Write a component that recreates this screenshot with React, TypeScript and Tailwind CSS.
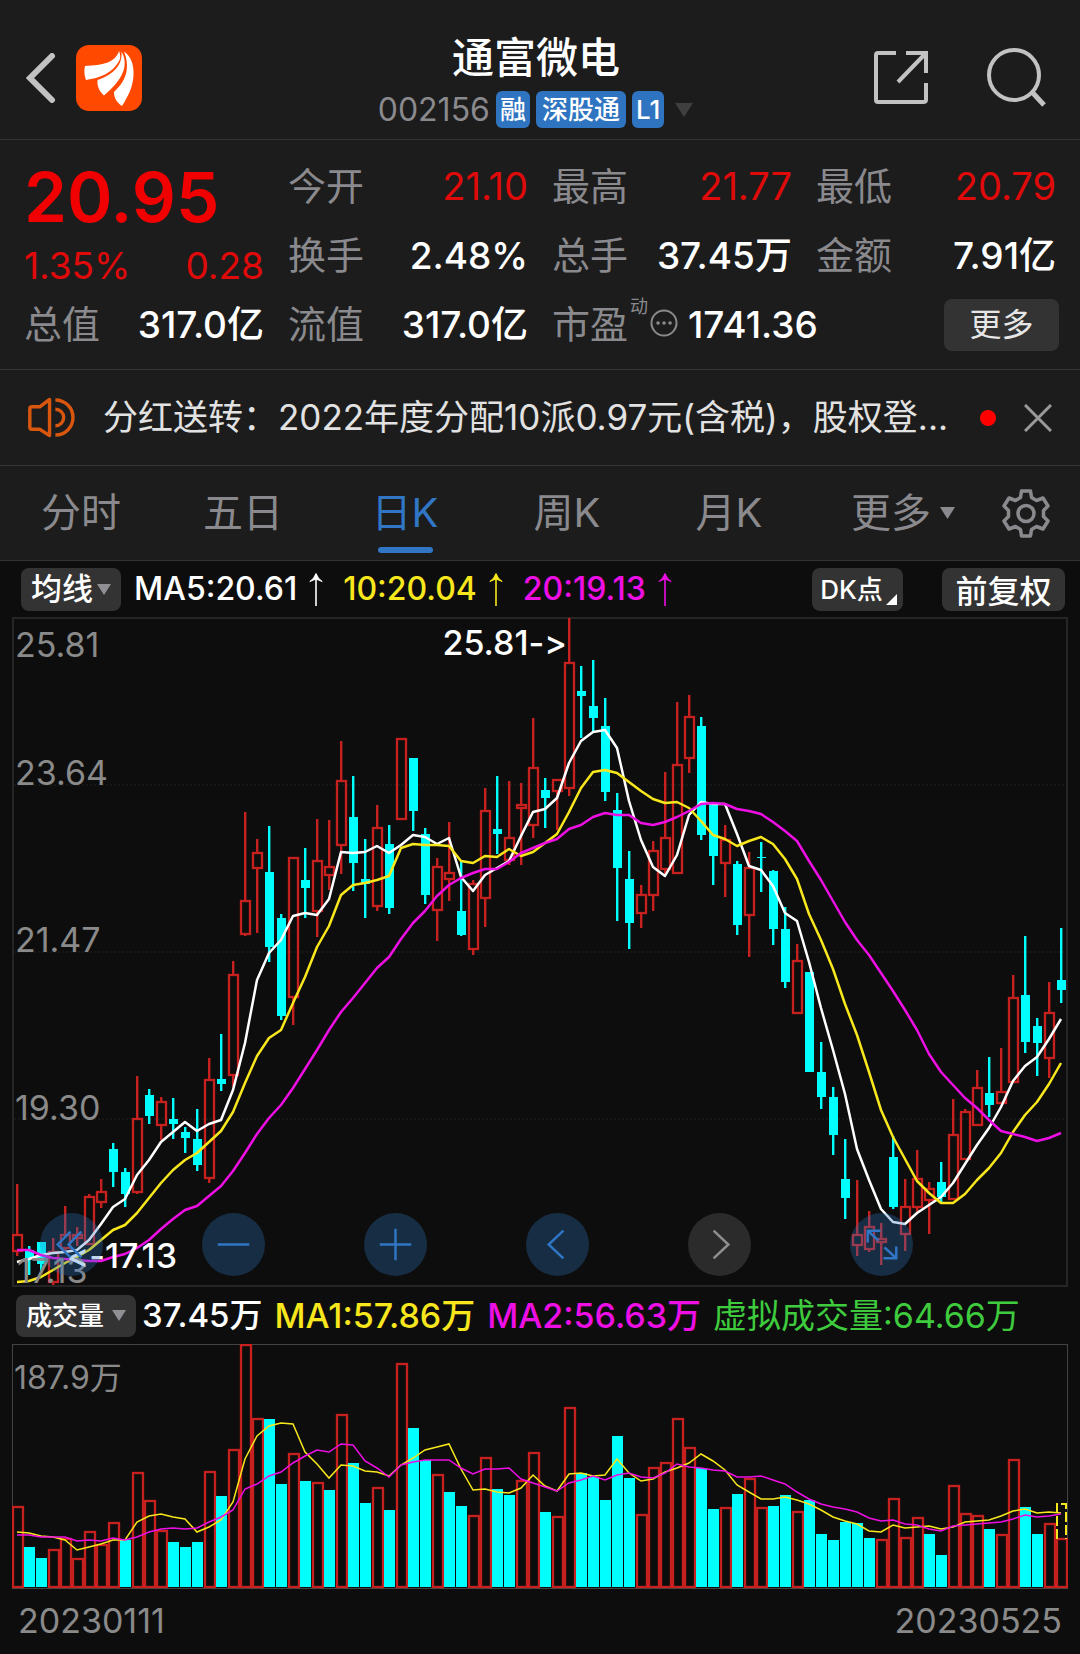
import React from "react";

type Candle = [kind: "r" | "c", high: number, top: number, bottom: number, low: number];

const RED = "#c6211f";
const CYAN = "#00ffff";
const YELLOW = "#f8e71c";
const MAGENTA = "#ee0fe4";

const candles: Candle[] = [
  ["r", 1184, 1235, 1251, 1256], ["c", 1246, 1250, 1259, 1275], ["c", 1242, 1242, 1264, 1271], ["r", 1238, 1252, 1282, 1285],
  ["r", 1206, 1235, 1248, 1252], ["r", 1227, 1235, 1238, 1246], ["r", 1194, 1197, 1244, 1244], ["r", 1179, 1192, 1202, 1208],
  ["c", 1143, 1149, 1172, 1187], ["c", 1168, 1172, 1194, 1207], ["r", 1076, 1119, 1192, 1194], ["c", 1089, 1095, 1116, 1124],
  ["r", 1097, 1102, 1125, 1140], ["c", 1098, 1119, 1124, 1139], ["c", 1127, 1132, 1138, 1153], ["c", 1109, 1139, 1165, 1171],
  ["r", 1058, 1080, 1178, 1183], ["c", 1034, 1079, 1084, 1091], ["r", 961, 975, 1075, 1087], ["r", 812, 901, 934, 936],
  ["r", 839, 853, 868, 933], ["c", 826, 872, 947, 962], ["c", 914, 918, 1016, 1020], ["r", 857, 858, 997, 1025],
  ["c", 848, 880, 888, 918], ["r", 819, 861, 911, 937], ["r", 820, 867, 875, 890], ["r", 741, 781, 845, 874],
  ["c", 776, 817, 863, 891], ["c", 839, 879, 884, 918], ["r", 805, 828, 906, 911], ["c", 825, 844, 908, 914],
  ["r", 739, 739, 819, 819], ["c", 758, 758, 811, 831], ["c", 828, 834, 895, 904], ["r", 858, 867, 910, 941],
  ["r", 822, 873, 879, 901], ["c", 862, 911, 935, 936], ["r", 880, 884, 949, 955], ["r", 788, 811, 898, 927],
  ["c", 776, 829, 834, 854], ["r", 781, 838, 860, 865], ["r", 783, 805, 808, 865], ["r", 718, 768, 825, 838],
  ["c", 778, 790, 798, 828], ["r", 779, 780, 791, 830], ["r", 618, 663, 788, 796], ["c", 666, 691, 696, 738],
  ["c", 660, 706, 718, 731], ["c", 698, 726, 792, 801], ["c", 793, 810, 868, 921], ["c", 851, 879, 923, 949],
  ["r", 885, 895, 913, 928], ["r", 841, 851, 895, 911], ["r", 772, 838, 869, 874], ["r", 702, 765, 873, 873],
  ["r", 695, 717, 758, 773], ["c", 717, 726, 835, 840], ["c", 804, 805, 856, 885], ["r", 825, 840, 863, 897],
  ["c", 861, 864, 925, 935], ["r", 852, 868, 915, 957], ["c", 842, 857, 858, 892], ["c", 870, 871, 929, 945],
  ["c", 907, 929, 982, 988], ["r", 944, 961, 1013, 1013], ["c", 972, 972, 1072, 1072], ["c", 1042, 1072, 1097, 1109],
  ["c", 1087, 1097, 1135, 1155], ["c", 1139, 1179, 1198, 1219], ["r", 1180, 1235, 1245, 1256], ["r", 1211, 1227, 1249, 1252],
  ["r", 1223, 1239, 1242, 1265], ["c", 1136, 1157, 1207, 1209], ["r", 1179, 1207, 1234, 1251], ["r", 1150, 1179, 1207, 1213],
  ["r", 1182, 1189, 1200, 1234], ["c", 1162, 1182, 1197, 1202], ["r", 1099, 1135, 1199, 1199], ["r", 1109, 1112, 1159, 1159],
  ["r", 1070, 1088, 1125, 1125], ["c", 1057, 1093, 1105, 1117], ["r", 1048, 1092, 1103, 1103], ["r", 975, 998, 1082, 1082],
  ["c", 936, 995, 1042, 1053], ["c", 1018, 1026, 1043, 1076], ["r", 982, 1013, 1058, 1078], ["c", 928, 980, 990, 1003],
];

const ma5 = [1262, 1259, 1255, 1253, 1252, 1250, 1240, 1224, 1207, 1199, 1175, 1160, 1142, 1132, 1122, 1131, 1124, 1120, 1090, 1043, 980, 953, 940, 916, 913, 915, 899, 852, 853, 852, 846, 853, 845, 835, 837, 844, 838, 877, 891, 875, 868, 861, 836, 812, 809, 798, 763, 741, 732, 730, 748, 801, 840, 867, 876, 855, 815, 802, 804, 804, 834, 866, 870, 886, 913, 921, 962, 1008, 1050, 1094, 1149, 1180, 1209, 1222, 1224, 1213, 1205, 1197, 1183, 1164, 1145, 1128, 1107, 1081, 1066, 1057, 1039, 1019];
const ma10 = [1282, 1281, 1277, 1270, 1263, 1257, 1250, 1240, 1230, 1225, 1213, 1198, 1183, 1170, 1160, 1153, 1142, 1131, 1112, 1083, 1056, 1038, 1030, 1003, 977, 947, 926, 895, 885, 883, 880, 876, 848, 844, 845, 845, 846, 861, 863, 856, 857, 849, 856, 852, 843, 834, 812, 788, 772, 770, 773, 782, 791, 799, 803, 802, 808, 821, 835, 839, 846, 841, 837, 844, 859, 879, 914, 940, 969, 1004, 1035, 1072, 1110, 1137, 1159, 1181, 1193, 1203, 1203, 1194, 1180, 1168, 1153, 1132, 1115, 1102, 1084, 1063];
const ma20 = [1250, 1250, 1255, 1258, 1259, 1260, 1261, 1261, 1257, 1254, 1248, 1240, 1229, 1219, 1210, 1206, 1196, 1186, 1171, 1153, 1134, 1118, 1105, 1088, 1069, 1050, 1030, 1012, 998, 983, 968, 957, 939, 923, 911, 896, 885, 878, 873, 869, 869, 862, 853, 848, 843, 839, 829, 825, 817, 813, 815, 815, 823, 825, 822, 817, 811, 804, 803, 804, 809, 811, 814, 822, 831, 841, 861, 880, 901, 922, 940, 955, 973, 991, 1010, 1030, 1054, 1072, 1085, 1098, 1108, 1120, 1131, 1134, 1137, 1141, 1138, 1133];

const volumeTops = [1507, 1547, 1558, 1550, 1539, 1559, 1532, 1545, 1523, 1540, 1473, 1501, 1531, 1542, 1547, 1542, 1472, 1496, 1450, 1345, 1419, 1419, 1484, 1454, 1481, 1483, 1490, 1415, 1463, 1503, 1488, 1510, 1364, 1428, 1460, 1475, 1492, 1506, 1516, 1458, 1489, 1495, 1481, 1453, 1512, 1517, 1408, 1473, 1477, 1500, 1436, 1478, 1515, 1468, 1463, 1419, 1448, 1468, 1509, 1508, 1494, 1479, 1508, 1506, 1495, 1512, 1500, 1534, 1540, 1522, 1523, 1538, 1540, 1499, 1538, 1518, 1534, 1555, 1486, 1514, 1516, 1529, 1535, 1460, 1507, 1534, 1524, 1539];
const volumeKinds = "rccrrrrrrcrrrcccrcrrrccrcrcrccrcrccrccrrccrrcrrccccc" + "rrrrrccrcrrccrccccc" + "crrrrccrrrcrrccrr";
const volMa1 = [1532, 1533, 1536, 1537, 1540, 1550, 1547, 1544, 1540, 1540, 1522, 1516, 1514, 1517, 1519, 1532, 1527, 1520, 1502, 1459, 1436, 1426, 1423, 1424, 1452, 1464, 1478, 1465, 1466, 1471, 1472, 1476, 1465, 1458, 1450, 1447, 1444, 1469, 1490, 1489, 1492, 1493, 1488, 1475, 1486, 1491, 1474, 1473, 1476, 1475, 1459, 1473, 1481, 1479, 1472, 1468, 1463, 1454, 1461, 1470, 1485, 1492, 1499, 1499, 1497, 1500, 1504, 1510, 1517, 1521, 1524, 1531, 1532, 1525, 1528, 1527, 1526, 1529, 1527, 1522, 1521, 1520, 1516, 1511, 1509, 1513, 1512, 1513];
const volMa2 = [1535, 1535, 1537, 1537, 1537, 1541, 1540, 1541, 1538, 1540, 1537, 1532, 1529, 1528, 1529, 1528, 1522, 1517, 1510, 1489, 1484, 1476, 1472, 1463, 1456, 1450, 1452, 1444, 1445, 1461, 1468, 1477, 1465, 1462, 1460, 1460, 1460, 1468, 1474, 1469, 1469, 1468, 1479, 1483, 1487, 1491, 1483, 1480, 1476, 1480, 1475, 1473, 1477, 1478, 1473, 1464, 1467, 1468, 1470, 1471, 1477, 1477, 1476, 1480, 1484, 1492, 1499, 1504, 1507, 1509, 1512, 1518, 1521, 1520, 1524, 1525, 1529, 1531, 1526, 1525, 1524, 1523, 1522, 1519, 1515, 1517, 1516, 1514];

const points = (ys: number[]) => ys.map((y, i) => `${17 + 12 * i},${y}`).join(" ");

function Caret({ className }: { className: string }) {
  return (
    <svg viewBox="0 0 14 11" className={className} aria-hidden="true">
      <path d="M0 0H14L7 11Z" fill="currentColor" />
    </svg>
  );
}

function UpArrow() {
  return (
    <svg viewBox="0 0 14 34" className="ml-3 h-[34px] w-[14px]" fill="none" stroke="currentColor" aria-hidden="true">
      <path d="M7 34V2" strokeWidth="1.6" />
      <path d="M0.8 9.5Q5 7 7 1.5Q9 7 13.2 9.5L7 7Z" fill="currentColor" strokeWidth="1" />
    </svg>
  );
}

function Header() {
  return (
    <header className="grid h-[140px] grid-cols-[1fr_auto_1fr] items-center border-b border-[#333333] pr-[34px] pl-[26px]">
      <div className="flex items-center gap-5 pt-4">
        <button aria-label="返回" className="text-[#c2c2c2]">
          <svg viewBox="0 0 30 50" className="h-[50px] w-[30px]" fill="none" stroke="currentColor" strokeWidth="6">
            <path d="M26 3L4 25L26 47" strokeLinecap="round" />
          </svg>
        </button>
        <button aria-label="东方财富">
          <svg viewBox="0 0 66 66" className="size-[66px]">
            <rect width="66" height="66" rx="13" fill="#ff4800" />
            <g fill="#ffffff">
              <path d="M9 21C27 20 39 18 43 6C45 11 44.500 14 42.500 17C36 28 24 33 10 35C8 30 8 25 9 21Z" />
              <path d="M45.500 6.500C50 14 50 24 44 33C39 41 33 46 28 50.500C23 46 21 41 21.500 35C34 31 47 22 45.500 6.500Z" />
              <path d="M48 6.500C55 11 58 20 57.500 30C57 43 51 53 46 61C39 56 38 51 38 47C49 37 55 24 48 6.500Z" />
            </g>
          </svg>
        </button>
      </div>
      <div className="flex flex-col items-center pt-7">
        <h1 className="text-[42px] leading-[52px] font-medium text-white">通富微电</h1>
        <button className="flex items-center gap-[6px] text-[26px] font-medium text-white">
          <span className="text-[32px] leading-[52px] font-normal text-[#8a8a8e]">002156</span>
          <span className="flex h-[37px] items-center rounded-[6px] bg-[#2f74c0] px-1">融</span>
          <span className="flex h-[37px] items-center rounded-[6px] bg-[#2f74c0] px-[6px]">深股通</span>
          <span className="flex h-[37px] items-center rounded-[6px] bg-[#2f74c0] px-1">L1</span>
          <Caret className="ml-1 h-[14px] w-5 text-[#3f3f3f]" />
        </button>
      </div>
      <div className="flex items-center justify-end gap-[56px] pt-[14px] text-[#c2c2c2]">
        <button aria-label="分享">
          <svg viewBox="0 0 56 56" className="size-14" fill="none" stroke="currentColor" strokeWidth="4">
            <path d="M22 4H4Q2 4 2 6V51Q2 53 4 53H49Q52 53 52 51V34M32 4H52V24M51 5L24 33" />
          </svg>
        </button>
        <button aria-label="搜索">
          <svg viewBox="0 0 60 60" className="size-[60px]" fill="none" stroke="currentColor" strokeWidth="4">
            <circle cx="28" cy="28" r="25" />
            <path d="M46 45L58 58" strokeWidth="5" />
          </svg>
        </button>
      </div>
    </header>
  );
}

function Stat({ label, value, up = false }: { label: string; value: string; up?: boolean }) {
  return (
    <div className="flex h-[69px] items-center justify-between whitespace-nowrap">
      <dt className="text-[38px] text-[#8a8a8e]">{label}</dt>
      <dd className={up ? "text-[38px] text-[#e00a0a]" : "text-[37px] font-medium text-white"}>{value}</dd>
    </div>
  );
}

function Quote() {
  return (
    <section className="border-b border-[#333333] px-6 pt-3 pb-[10px]">
      <dl className="grid grid-cols-4 gap-x-6">
        <div className="row-span-2 text-[#e00a0a]">
          <dd className="text-[69px] leading-[90px] font-semibold text-[#f00000]">20.95</dd>
          <dd className="flex justify-between text-[37px] leading-[48px]">
            <span>1.35%</span>
            <span>0.28</span>
          </dd>
        </div>
        <Stat label="今开" value="21.10" up />
        <Stat label="最高" value="21.77" up />
        <Stat label="最低" value="20.79" up />
        <Stat label="换手" value="2.48%" />
        <Stat label="总手" value="37.45万" />
        <Stat label="金额" value="7.91亿" />
        <Stat label="总值" value="317.0亿" />
        <Stat label="流值" value="317.0亿" />
        <div className="col-span-2 flex h-[69px] items-center">
          <dt className="flex items-center text-[38px] text-[#8a8a8e]">
            市盈
            <sup className="top-0 -mt-9 ml-[2px] text-[18px] leading-none">动</sup>
            <svg viewBox="0 0 28 28" className="-mt-1 ml-[2px] size-7" fill="none" stroke="currentColor" strokeWidth="2" aria-hidden="true">
              <circle cx="14" cy="14" r="12.500" />
              <path d="M8 14h.1M14 14h.1M20 14h.1" strokeWidth="3.500" strokeLinecap="round" />
            </svg>
          </dt>
          <dd className="ml-[10px] text-[37px] font-medium text-white">1741.36</dd>
          <dd className="-mr-[3px] ml-auto flex">
            <button className="h-[52px] w-[115px] rounded-[8px] bg-[#333333] text-[32px] text-[#e6e6e6]">更多</button>
          </dd>
        </div>
      </dl>
    </section>
  );
}

function Notice() {
  return (
    <section className="flex h-24 items-center border-b border-[#333333] px-7">
      <svg viewBox="0 0 48 42" className="h-[41px] w-[47px] shrink-0" fill="none" stroke="#d9560f" strokeWidth="3.500" aria-hidden="true">
        <path d="M22 2.500V39.500L12 33H4Q1.800 33 1.800 31V12Q1.800 10 4 10H12Z" strokeLinejoin="round" />
        <path d="M28 12.500A8.500 8.500 0 0 1 28 29.500M28 3A18 18 0 0 1 28 39" />
      </svg>
      <a href="#notice" className="ml-7 flex-1 truncate text-[35px] text-[#e2e2e2]">
        分红送转：2022年度分配10派0.97元(含税)，股权登...
      </a>
      <span className="ml-4 size-4 shrink-0 rounded-full bg-[#ff0000]" />
      <button aria-label="关闭" className="ml-7 shrink-0 text-[#9a9a9a]">
        <svg viewBox="0 0 28 28" className="size-7" stroke="currentColor" strokeWidth="3">
          <path d="M1 1L27 27M27 1L1 27" />
        </svg>
      </button>
    </section>
  );
}

const gearPath =
  "M19.500 2H28.500L29.500 8.500L34.500 11.500L41 9L46 17L41.500 21.500V27.500L46 32L41 40L34.500 37.500L29.500 40.500L28.500 47H19.500L18.500 40.500L13.500 37.500L7 40L2 32L6.500 27.500V21.500L2 17L7 9L13.500 11.500L18.500 8.500Z";

function Tabs() {
  return (
    <nav className="grid h-[95px] grid-cols-[3fr_3fr_3fr_3fr_3fr_3fr_2fr] border-b border-[#333333] text-[40px] text-[#8a8a8e]">
      {["分时", "五日", "日K", "周K", "月K"].map((tab) => (
        <button
          key={tab}
          className={tab === "日K" ? "relative flex items-center justify-center text-[#3076c4]" : "flex items-center justify-center"}
        >
          {tab}
          {tab === "日K" && <span className="absolute bottom-[7px] h-[6px] w-[55px] rounded-full bg-[#3076c4]" />}
        </button>
      ))}
      <button className="flex items-center justify-center gap-[9px] pl-6">
        更多
        <Caret className="h-3 w-[15px]" />
      </button>
      <button aria-label="设置" className="flex items-center justify-center">
        <svg viewBox="0 0 48 49" className="h-[49px] w-12" fill="none" stroke="currentColor" strokeWidth="3.500">
          <path d={gearPath} strokeLinejoin="round" />
          <circle cx="24" cy="24.500" r="8" />
        </svg>
      </button>
    </nav>
  );
}

function AverageBar() {
  return (
    <div className="flex h-[56px] items-center pr-[15px] pl-[21px] text-[32px] font-medium whitespace-nowrap text-white">
      <button className="flex h-[43px] w-[100px] items-center justify-center gap-1 rounded-[8px] bg-[#333333] text-[31px]">
        均线
        <Caret className="h-[11px] w-[14px] text-[#8f8f94]" />
      </button>
      <span className="ml-[13px] flex items-center">MA5:20.61<UpArrow /></span>
      <span className="ml-5 flex items-center text-[#f8e71c]">10:20.04<UpArrow /></span>
      <span className="ml-5 flex items-center text-[#ee0fe4]">20:19.13<UpArrow /></span>
      <button className="relative ml-auto h-[43px] w-[91px] rounded-[8px] bg-[#333333] pr-3 text-[26px]">
        DK点
        <svg viewBox="0 0 11 11" className="absolute right-[6px] bottom-[6px] size-[11px]" aria-hidden="true">
          <path d="M11 0V11H0Z" fill="#ffffff" />
        </svg>
      </button>
      <button className="ml-[39px] h-[43px] w-[123px] rounded-[8px] bg-[#333333]">前复权</button>
    </div>
  );
}

const controls = [
  { label: "最早", path: "M31 19L18 32L31 45M42 19L29 32L42 45" },
  { label: "缩小", path: "M16 32H48" },
  { label: "放大", path: "M16 32H48M32 16V48" },
  { label: "左移", path: "M38 18L23 32L38 46" },
  { label: "右移", path: "M26 18L41 32L26 46" },
  { label: "全屏", path: "M18 30V18H31M18 18L29 28M47 34V46H34M47 46L35 35" },
];

function PriceChart() {
  return (
    <div className="relative mx-3">
      <svg viewBox="12 617 1056 670" className="block w-full" role="img" aria-label="日K线图">
        <rect x="13" y="618" width="1054" height="668" fill="none" stroke="#252525" strokeWidth="2" />
        <path d="M14 785H1066M14 952H1066M14 1119H1066" stroke="#222222" strokeDasharray="2 2" />
        {candles.map(([kind, high, top, bottom, low], i) => {
          const x = 17 + 12 * i;
          const color = kind === "r" ? RED : CYAN;
          return (
            <g key={i} fill={color}>
              {top > high && <rect x={x - 1} y={high} width="2.400" height={top - high} />}
              {low > bottom && <rect x={x - 1} y={bottom} width="2.400" height={low - bottom} />}
              {kind === "r" ? (
                <rect x={x - 4} y={top} width="9" height={bottom - top} fill="none" stroke={RED} strokeWidth="2.300" />
              ) : (
                <rect x={x - 4} y={top} width="9" height={bottom - top} />
              )}
            </g>
          );
        })}
        <g fill="none" strokeWidth="2.500" strokeLinejoin="round">
          <polyline points={points(ma5)} stroke="#ffffff" />
          <polyline points={points(ma10)} stroke={YELLOW} />
          <polyline points={points(ma20)} stroke={MAGENTA} />
        </g>
        <g fontSize="34" fill="#8a8a8a">
          <text x="15" y="657">25.81</text>
          <text x="15" y="785">23.64</text>
          <text x="15" y="952">21.47</text>
          <text x="15" y="1120">19.30</text>
          <text x="17" y="1283">17.13</text>
        </g>
        <g fontSize="34" fontWeight="500" fill="#ffffff" textAnchor="end" className="[font-variant-ligatures:none]">
          <text x="567" y="655">25.81-&gt;</text>
          <text x="177" y="1268">&lt;-17.13</text>
        </g>
      </svg>
      <div className="absolute right-[155px] bottom-[11px] left-7 flex justify-between">
        {controls.map(({ label, path }) => (
          <button
            key={label}
            aria-label={label}
            className={
              label === "右移"
                ? "size-[63px] rounded-full bg-[#2b2b2b] text-[#8f8f8f]"
                : "size-[63px] rounded-full bg-[#3076c4]/30 text-[#3076c4]"
            }
          >
            <svg viewBox="0 0 64 64" className="size-full" fill="none" stroke="currentColor" strokeWidth="2.500">
              <path d={path} />
            </svg>
          </button>
        ))}
      </div>
    </div>
  );
}

function VolumeBar() {
  return (
    <div className="flex h-[57px] items-center gap-3 pl-4 text-[34px] font-medium whitespace-nowrap text-white">
      <button className="-mr-[6px] flex h-[42px] w-[120px] items-center justify-center gap-2 rounded-[8px] bg-[#333333] text-[26px]">
        成交量
        <Caret className="h-[11px] w-[14px] text-[#8f8f94]" />
      </button>
      <span className="text-[33px]">37.45万</span>
      <span className="text-[#f8e71c]">MA1:57.86万</span>
      <span className="text-[#ee0fe4]">MA2:56.63万</span>
      <span className="font-normal text-[#3ecb3e]">虚拟成交量:64.66万</span>
    </div>
  );
}

function VolumeChart() {
  return (
    <div className="mx-3">
      <svg viewBox="12 1344 1056 245" className="block w-full" role="img" aria-label="成交量图">
        <rect x="12.500" y="1344.500" width="1055" height="244" fill="none" stroke="#444444" />
        {volumeTops.map((top, i) => {
          const x = 12 + 12 * i;
          return volumeKinds[i] === "c" ? (
            <rect key={i} x={x} y={top} width="11" height={1587 - top} fill={CYAN} />
          ) : (
            <rect key={i} x={x + 1} y={top} width="10" height={1587 - top} fill="none" stroke={RED} strokeWidth="2.300" />
          );
        })}
        <path d="M1057 1539V1504H1066V1539" fill="none" stroke={YELLOW} strokeWidth="2" strokeDasharray="10 3" />
        <g fill="none" strokeWidth="1.500">
          <polyline points={points(volMa1)} stroke={YELLOW} />
          <polyline points={points(volMa2)} stroke={MAGENTA} />
        </g>
        <text x="14" y="1389" fontSize="32" fill="#8a8a8a">187.9万</text>
      </svg>
      <div className="flex justify-between px-[6px] pt-2 text-[34px] leading-[48px] text-[#8a8a8a]">
        <time dateTime="2023-01-11">20230111</time>
        <time dateTime="2023-05-25">20230525</time>
      </div>
    </div>
  );
}

export default function App() {
  return (
    <main className="min-h-screen bg-[#0d0d0d] font-['Inter','Noto_Sans_CJK_SC',sans-serif]">
      <div className="bg-[#1c1c1c]">
        <Header />
        <Quote />
        <Notice />
        <Tabs />
      </div>
      <AverageBar />
      <PriceChart />
      <VolumeBar />
      <VolumeChart />
    </main>
  );
}
